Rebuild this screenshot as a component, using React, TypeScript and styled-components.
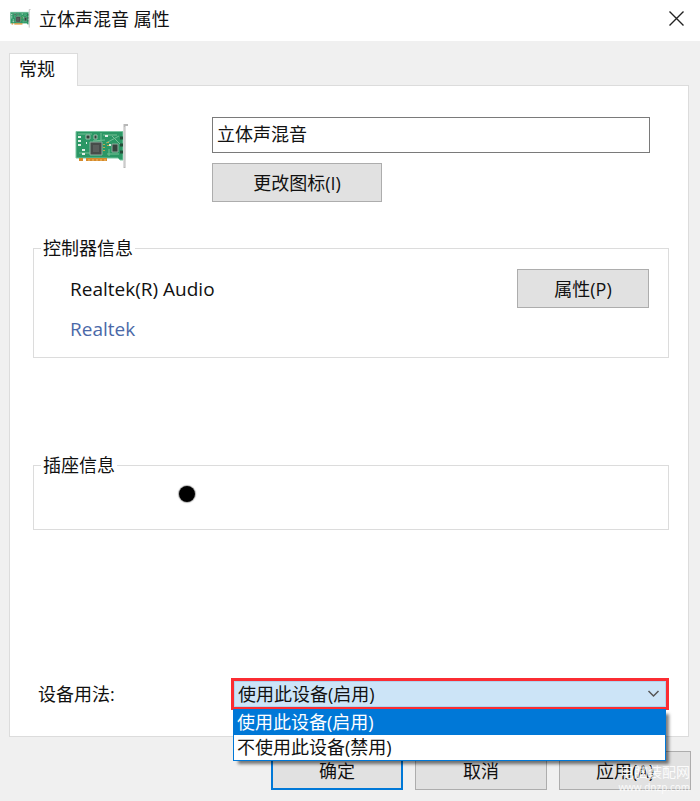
import React, { useState } from "react";
import styled, { createGlobalStyle, css } from "styled-components";

const GlobalStyle = createGlobalStyle`
  * { box-sizing: border-box; }
  body {
    margin: 0;
    background: #f0f0f0;
    color: #111;
    font: 18px/24px "Open Sans", "Noto Sans CJK SC", sans-serif;
  }
  button, input, select { font: inherit; color: inherit; }
`;

const Dialog = styled.main`
  min-height: 100vh;
  background: #f0f0f0;
`;

const TitleBar = styled.header`
  display: flex;
  align-items: center;
  height: 41px;
  padding: 0 13px 4px 10px;
  background: #fff;
`;

const Title = styled.h1`
  flex: 1;
  margin: 0 0 0 8px;
  font-size: 18px;
  font-weight: 400;
`;

const CloseButton = styled.button`
  display: flex;
  padding: 2px;
  border: 0;
  background: none;
`;

const Tabs = styled.nav`
  display: flex;
  padding: 12px 9px 0;
`;

const Tab = styled.button`
  position: relative;
  z-index: 1;
  width: 69px;
  height: 33px;
  margin-bottom: -1px;
  padding: 0 13px 2px 9px;
  border: 1px solid #dcdcdc;
  border-bottom: 0;
  background: #fff;
  text-align: left;
  white-space: nowrap;
`;

const Panel = styled.section`
  margin: 0 11px 0 9px;
  padding: 31px 19px 26px 23px;
  border: 1px solid #dcdcdc;
  background: #fff;
`;

const DeviceHeader = styled.div`
  display: grid;
  grid-template-columns: 179px 1fr;
  padding-right: 19px;
`;

const DeviceIcon = styled.div`
  padding: 7px 0 0 42px;
`;

const DeviceFields = styled.div`
  display: flex;
  flex-direction: column;
  align-items: flex-start;
  gap: 10px;
`;

const NameInput = styled.input`
  width: 100%;
  height: 36px;
  padding: 0 4px 4px;
  border: 1px solid #7a7a7a;
  border-radius: 0;
  background: #fff;
  outline: none;
`;

const Button = styled.button<{ $wide?: boolean; $primary?: boolean }>`
  width: ${(p) => (p.$wide ? 170 : 132)}px;
  height: 39px;
  padding: 0;
  border: 1px solid #adadad;
  background: #e1e1e1;
  ${(p) => p.$primary && css`border: 2px solid #0078d7;`}
`;

const Group = styled.fieldset<{ $gap: number }>`
  display: flex;
  justify-content: space-between;
  min-width: 0;
  margin: ${(p) => p.$gap}px 0 0;
  padding: 9px 19px 8px 36px;
  border: 1px solid #dcdcdc;
`;

const Legend = styled.legend`
  margin-left: -29px;
  padding: 0 2px;
`;

const DriverInfo = styled.div`
  display: flex;
  flex-direction: column;
  font-size: 19px;
  line-height: 40px;
`;

const VendorLink = styled.a`
  color: #4b69a8;
  text-decoration: none;
`;

const Jack = styled.div`
  width: 16px;
  height: 16px;
  margin: 0 0 19px 109px;
  border-radius: 50%;
  background: #000;
  box-shadow: 0 0 1px 1px #aaa;
`;

const UsageRow = styled.div`
  display: flex;
  align-items: center;
  margin-top: 148px;
  padding-left: 5px;
`;

const UsageLabel = styled.label`
  width: 193px;
`;

const Combo = styled.div`
  position: relative;
  flex: 1;
  height: 32px;
  border: 3px solid #fb2c32;
`;

const UsageSelect = styled.select`
  display: block;
  width: 100%;
  height: 26px;
  padding: 0 3px;
  border: 1px solid #b0d2ef;
  border-radius: 0;
  background: #cce4f7;
  appearance: none;
  outline: none;
`;

const ComboArrow = styled.svg`
  position: absolute;
  top: 8px;
  right: 6px;
  pointer-events: none;
`;

const OptionList = styled.ul`
  position: absolute;
  z-index: 2;
  top: 28px;
  left: -1px;
  right: 0;
  margin: 0;
  padding: 0;
  border: 1px solid #0078d7;
  background: #fff;
  box-shadow: 4px 4px 3px -1px rgba(0, 0, 0, 0.5);
  list-style: none;
`;

const Option = styled.li<{ $active: boolean }>`
  height: 25px;
  padding: 0 3px;
  background: ${(p) => (p.$active ? "#0078d7" : "#fff")};
  color: ${(p) => (p.$active ? "#fff" : "#111")};
`;

const Footer = styled.footer`
  position: relative;
  display: flex;
  justify-content: flex-end;
  gap: 12px;
  padding: 14px 9px 11px;
`;

const Watermark = styled.div`
  position: absolute;
  right: 10px;
  top: 26px;
  color: rgba(255, 255, 255, 0.9);
  font-size: 14px;
  line-height: 18px;
  text-align: right;
  pointer-events: none;
`;

const WatermarkUrl = styled.div`
  font: 10px/12px "Open Sans", sans-serif;
`;

function SoundCard({ width, height }: { width: number; height: number }) {
  return (
    <svg width={width} height={height} viewBox="0 0 54 45" preserveAspectRatio="none" aria-hidden="true">
      <path d="M1 7.5H48V36H45L43 34H1Z" fill="#2b9765" stroke="#79c5a0" />
      <path d="M3 10H17M28 11H42M4 29H16M32 30H44M26 9V16M37 12L45 20M31 19L44 12M18 17L30 16M34 25V32" stroke="#76bf96" fill="none" />
      <path d="M4 34H8V37H4ZM11 34H32V37H11Z" fill="#d58a2c" />
      <path d="M14 35V37M18 35V37M22 35V37M26 35V37M30 35V37" stroke="#f2bd67" />
      <path d="M15 18H27V31H15Z" fill="#474c4a" stroke="#90b1a2" />
      <path d="M18 21H24V28H18Z" fill="#5a5e5c" />
      <path d="M37 20H43V28H37Z" fill="#35443d" stroke="#8daa9c" />
      <path d="M11 11H15V15H11ZM19 11H22V15H19Z" fill="#304238" stroke="#9abdab" />
      <path d="M3 13H6M3 17H6M3 21H6M7 26H10M7 30H10M30 12H33M34 21H36M11 19H12" stroke="#e0eee6" strokeWidth="2" />
      <path d="M29 20V29M33 18V22" stroke="#c1a84c" strokeWidth="2" strokeDasharray="1 2" />
      <path d="M45 14H48M45 21H48M45 28H48" stroke="#244d39" strokeWidth="3" />
      <path d="M53 1H49.5V44" stroke="#b8b8b8" strokeWidth="2" fill="none" />
      <path d="M49 3V43" stroke="#dedede" />
    </svg>
  );
}

const options = ["使用此设备(启用)", "不使用此设备(禁用)"];

export default function App() {
  const [name, setName] = useState("立体声混音");
  const [usage, setUsage] = useState(options[0]);

  return (
    <>
      <GlobalStyle />
      <Dialog>
        <TitleBar>
          <SoundCard width={21} height={19} />
          <Title>立体声混音 属性</Title>
          <CloseButton aria-label="关闭">
            <svg width="17" height="17" viewBox="0 0 17 17" aria-hidden="true">
              <path d="M1.5 1.5L15.5 15.5M15.5 1.5L1.5 15.5" stroke="#222" strokeWidth="1.4" />
            </svg>
          </CloseButton>
        </TitleBar>
        <Tabs role="tablist">
          <Tab role="tab" aria-selected="true">常规</Tab>
        </Tabs>
        <Panel role="tabpanel" aria-label="常规">
          <DeviceHeader>
            <DeviceIcon>
              <SoundCard width={54} height={45} />
            </DeviceIcon>
            <DeviceFields>
              <NameInput aria-label="名称" value={name} onChange={(e) => setName(e.target.value)} />
              <Button $wide>更改图标(I)</Button>
            </DeviceFields>
          </DeviceHeader>
          <Group $gap={34}>
            <Legend>控制器信息</Legend>
            <DriverInfo>
              <span>Realtek(R) Audio</span>
              <VendorLink href="#realtek">Realtek</VendorLink>
            </DriverInfo>
            <Button>属性(P)</Button>
          </Group>
          <Group $gap={95}>
            <Legend>插座信息</Legend>
            <Jack />
          </Group>
          <UsageRow>
            <UsageLabel htmlFor="usage">设备用法:</UsageLabel>
            <Combo>
              <UsageSelect id="usage" value={usage} onChange={(e) => setUsage(e.target.value)}>
                {options.map((o) => <option key={o}>{o}</option>)}
              </UsageSelect>
              <ComboArrow width="13" height="10" viewBox="0 0 13 10" aria-hidden="true">
                <path d="M1.5 2L6.5 7L11.5 2" fill="none" stroke="#555" strokeWidth="1.5" />
              </ComboArrow>
              <OptionList role="listbox" aria-label="设备用法">
                {options.map((o) => (
                  <Option key={o} role="option" aria-selected={o === usage} $active={o === usage} onClick={() => setUsage(o)}>
                    {o}
                  </Option>
                ))}
              </OptionList>
            </Combo>
          </UsageRow>
        </Panel>
        <Footer>
          <Button $primary>确定</Button>
          <Button>取消</Button>
          <Button>应用(A)</Button>
          <Watermark>
            电脑装配网
            <WatermarkUrl>www.dnzp.com</WatermarkUrl>
          </Watermark>
        </Footer>
      </Dialog>
    </>
  );
}
